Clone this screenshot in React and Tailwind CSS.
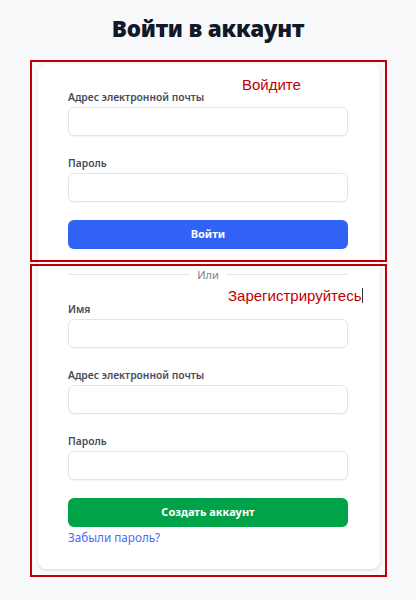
import React from "react";

function Field({ label, first }) {
  return (
    <div className={first ? "flex flex-col" : "mt-[20px] flex flex-col"}>
      <label className="text-[10.3px] leading-[15px] font-semibold text-[#474b59]">{label}</label>
      <div className="mt-[2px] h-[29px] rounded-[6px] border border-[#e2e4e9] bg-white shadow-[0_1px_1px_rgba(0,0,0,0.03)]" />
    </div>
  );
}

export default function App() {
  return (
    <div className="min-h-[600px] w-full bg-[#f8f9fb] font-['Noto_Sans','Open_Sans',sans-serif]">
      <h1 className="pt-[13px] text-center text-[22.5px] leading-[32px] font-black tracking-[-0.2px] text-[#111827]">
        Войти в аккаунт
      </h1>
      <div className="relative ml-[38px] mt-[19px] w-[342px] rounded-[8px] bg-white pl-[30px] pr-[32px] pt-[26px] pb-[24px] shadow-[0_1px_3px_rgba(0,0,0,0.1),0_1px_2px_rgba(0,0,0,0.06)]">
        <Field label="Адрес электронной почты" first />
        <Field label="Пароль" />
        <button className="mt-[18px] h-[29px] w-full rounded-[6px] bg-[#3062f6] text-[11px] font-bold text-white">
          Войти
        </button>
        <div className="mt-[18px] flex items-center gap-[7px]">
          <div className="h-px flex-1 bg-[#e3e5ea]" />
          <span className="text-[11px] leading-[15px] text-[#7b7f8a]">Или</span>
          <div className="h-px flex-1 bg-[#e3e5ea]" />
        </div>
        <Field label="Имя" />
        <Field label="Адрес электронной почты" />
        <Field label="Пароль" />
        <button className="mt-[18px] h-[29px] w-full rounded-[6px] bg-[#00a347] text-[11px] font-bold text-white">
          Создать аккаунт
        </button>
        <a className="mt-[2px] block text-[11.7px] leading-[16px] text-[#4b6cf6]">Забыли пароль?</a>

        <div className="pointer-events-none absolute left-[-8px] top-[-4px] h-[202px] w-[357px] border-2 border-[#c00000]" />
        <div className="pointer-events-none absolute left-[-8px] top-[200px] h-[313px] w-[357px] border-2 border-[#c00000]" />
        <span className="absolute left-[204px] top-[12px] font-['Liberation_Sans',Arial,sans-serif] text-[15px] leading-[17px] text-[#c00000]">
          Войдите
        </span>
        <span className="absolute left-[190px] top-[223px] flex items-center font-['Liberation_Sans',Arial,sans-serif] text-[15px] leading-[17px] text-[#c00000]">
          Зарегистрируйтесь
          <span className="ml-px inline-block h-[15px] w-px bg-[#333]" />
        </span>
      </div>
    </div>
  );
}
